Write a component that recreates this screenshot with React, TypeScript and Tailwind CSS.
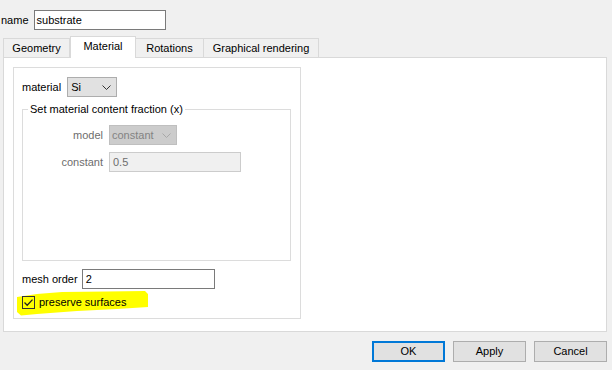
import { ReactNode } from 'react'

function Chevron({ color }: { color: string }) {
  return (
    <svg width="9" height="5" viewBox="0 0 9 5" className="shrink-0">
      <path d="M0.5 0.5 L4.5 4.5 L8.5 0.5" fill="none" stroke={color} strokeWidth="1" />
    </svg>
  )
}

function Tab({ label, active, width }: { label: string; active?: boolean; width: string }) {
  if (active) {
    return (
      <div
        className={`${width} h-[22px] -mb-[1px] z-10 bg-white border border-b-0 border-[#d9d9d9] flex items-start justify-center pt-[3px]`}
      >
        {label}
      </div>
    )
  }
  return (
    <div className={`${width} h-[19px] border-t border-r border-[#d9d9d9] first:border-l flex items-center justify-center`}>
      {label}
    </div>
  )
}

function Button({ children, primary }: { children: ReactNode; primary?: boolean }) {
  return (
    <button
      className={`w-[73px] h-[21px] bg-[#e1e1e1] flex items-center justify-center ${
        primary ? 'border-2 border-[#0078d7]' : 'border border-[#adadad]'
      }`}
    >
      {children}
    </button>
  )
}

export default function App() {
  return (
    <div className="w-[612px] h-[370px] bg-[#f0f0f0] flex flex-col font-['Liberation_Sans',Arial,sans-serif] text-[11px] leading-[13px] text-black overflow-hidden">
      {/* name row */}
      <div className="flex items-center h-[20px] mt-[10px] pl-[1px]">
        <span>name</span>
        <div className="ml-[5px] w-[132px] h-[20px] bg-white border border-[#7a7a7a] flex items-center pl-[2px]">
          substrate
        </div>
      </div>

      {/* tabs */}
      <div className="flex items-end h-[21px] mt-[6px] pl-[3px]">
        <Tab label="Geometry" width="w-[67px]" />
        <Tab label="Material" width="w-[66px]" active />
        <Tab label="Rotations" width="w-[68px]" />
        <Tab label="Graphical rendering" width="w-[115px]" />
      </div>

      {/* tab pane */}
      <div className="ml-[3px] w-[604px] h-[275px] bg-white border border-[#d9d9d9] pt-[9px] pl-[9px]">
        <div className="w-[288px] h-[252px] border border-[#dcdcdc] pt-[9px] pl-[8px] flex flex-col">
          <div className="flex items-center h-[20px]">
            <span>material</span>
            <div className="ml-[6px] w-[50px] h-[20px] bg-[#e1e1e1] border border-[#adadad] flex items-center justify-between pl-[3px] pr-[5px]">
              <span>Si</span>
              <Chevron color="#333333" />
            </div>
          </div>

          {/* content fraction group */}
          <div className="mt-[12px] w-[269px] h-[152px] border border-[#dcdcdc] flex flex-col">
            <span className="-mt-[7px] ml-[5px] px-[2px] bg-white w-fit">Set material content fraction (x)</span>
            <div className="grid grid-cols-[80px_auto] gap-x-[6px] gap-y-[7px] mt-[9px] items-center">
              <span className="text-right text-[#6d6d6d]">model</span>
              <div className="w-[68px] h-[20px] bg-[#cccccc] border border-[#bfbfbf] flex items-center justify-between pl-[2px] pr-[5px] text-[#838383]">
                <span>constant</span>
                <Chevron color="#a8a8a8" />
              </div>
              <span className="text-right text-[#6d6d6d]">constant</span>
              <div className="w-[132px] h-[20px] bg-[#f0f0f0] border border-[#cccccc] flex items-center pl-[3px] text-[#6d6d6d]">
                0.5
              </div>
            </div>
          </div>

          <div className="flex items-center h-[20px] mt-[8px]">
            <span>mesh order</span>
            <div className="ml-[4px] w-[133px] h-[20px] bg-white border border-[#7a7a7a] flex items-center pl-[3px]">
              2
            </div>
          </div>

          {/* highlighted checkbox */}
          <div className="relative flex items-center h-[13px] mt-[7px]">
            <svg className="absolute -left-[5px] -top-[5px]" width="132" height="25" viewBox="0 0 132 25">
              <polygon
                points="0,6 20,3 45,1 90,0.5 128,0 131,3 131,16 100,18 60,20 20,23 4,24.5 0,21"
                fill="#ffff00"
              />
            </svg>
            <div className="relative w-[13px] h-[13px] border border-[#333333] flex items-center justify-center">
              <svg width="11" height="11" viewBox="0 0 11 11">
                <path d="M1.5 5.5 L4.2 8.2 L9.5 2.6" fill="none" stroke="#222222" strokeWidth="1.3" />
              </svg>
            </div>
            <span className="relative ml-[4px]">preserve surfaces</span>
          </div>
        </div>
      </div>

      {/* buttons */}
      <div className="flex justify-end gap-[8px] pr-[5px] mt-[9px]">
        <Button primary>OK</Button>
        <Button>Apply</Button>
        <Button>Cancel</Button>
      </div>
    </div>
  )
}
